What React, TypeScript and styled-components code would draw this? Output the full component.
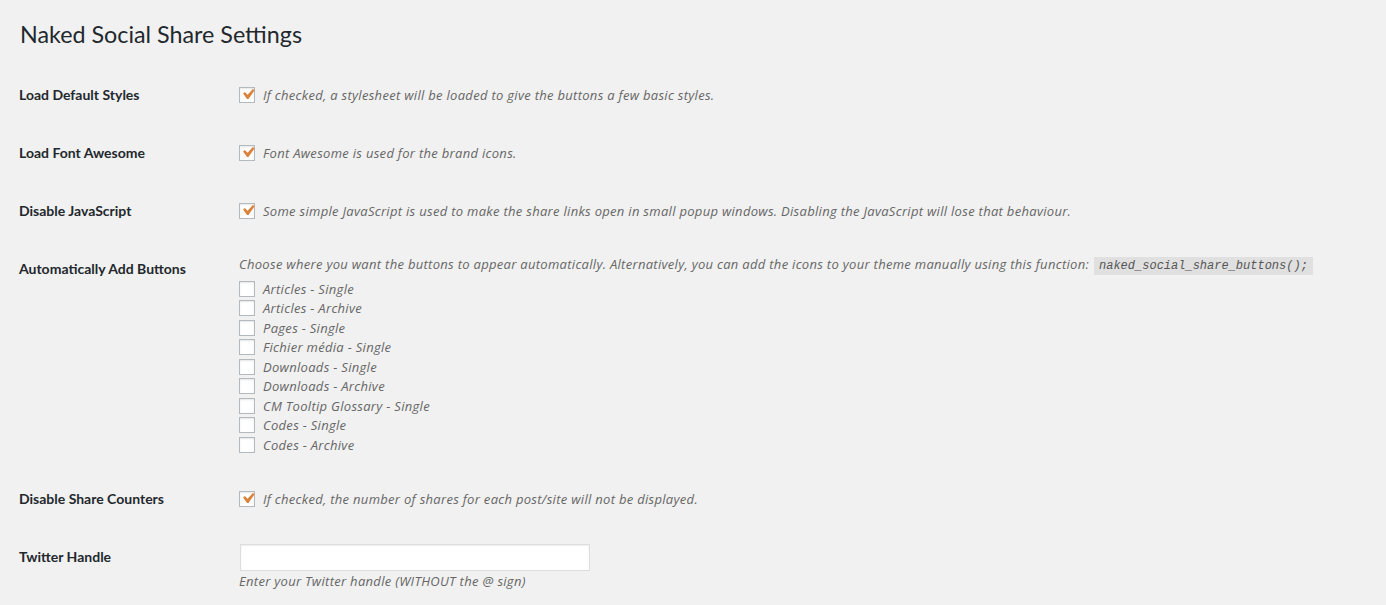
import React from 'react';
import styled, { createGlobalStyle } from 'styled-components';

const GlobalStyle = createGlobalStyle`
    html, body {
        margin: 0;
        padding: 0;
        background: #f1f1f1;
    }
    body {
        font-family: Lato, "Open Sans", sans-serif;
        color: #444;
        font-size: 13px;
    }
`;

const Wrap = styled.div`
    padding: 0 20px 0 19px;
`;

const Title = styled.h1`
    margin: 0 0 20px;
    padding: 20px 0 0 1px;
    height: 46px;
    box-sizing: border-box;
    font-size: 23.3px;
    line-height: 29px;
    font-weight: 400;
    color: #23282d;
`;

const Table = styled.div`
    display: flex;
    flex-direction: column;
`;

const Row = styled.div`
    display: grid;
    grid-template-columns: 220px 1fr;
`;

const Label = styled.div`
    padding: 20px 0;
    font-size: 14px;
    line-height: 18px;
    font-weight: 700;
    color: #23282d;
`;

const Cell = styled.div`
    padding: 15px 0;
`;

const Option = styled.div<{ $h?: number }>`
    display: flex;
    align-items: center;
    gap: 8px;
    height: ${p => p.$h ?? 28}px;
`;

const Box = styled.span`
    width: 16px;
    height: 16px;
    box-sizing: border-box;
    border: 1px solid #b4b9be;
    background: #fff;
    box-shadow: inset 0 1px 2px rgba(0, 0, 0, 0.1);
    display: flex;
    align-items: center;
    justify-content: center;
    flex-shrink: 0;
    overflow: visible;
`;

const Desc = styled.span`
    font-family: "Open Sans", sans-serif;
    font-style: italic;
    color: #666;
    font-size: 13px;
    letter-spacing: 0.3px;
    white-space: nowrap;
`;

const Intro = styled.p`
    margin: 0 0 3px;
    font-family: "Open Sans", sans-serif;
    font-size: 13px;
    letter-spacing: 0.3px;
    font-style: italic;
    color: #666;
    line-height: 19px;
    white-space: nowrap;
`;

const Code = styled.code`
    background: rgba(0, 0, 0, 0.07);
    padding: 2px 5px 2px;
    margin-left: 5px;
    font-family: "Liberation Mono", monospace;
    font-size: 12px;
    letter-spacing: 0;
    font-style: italic;
    color: #555;
`;

const TextInput = styled.input`
    display: block;
    width: 350px;
    height: 27px;
    box-sizing: border-box;
    margin: 1px 0 0 1px;
    border: 1px solid #ddd;
    background: #fff;
    box-shadow: inset 0 1px 2px rgba(0, 0, 0, 0.07);
    outline: none;
`;

const Help = styled.p`
    margin: 1px 0 0;
    font-family: "Open Sans", sans-serif;
    font-size: 13px;
    letter-spacing: 0.3px;
    font-style: italic;
    color: #666;
    line-height: 18px;
`;

const Tick = styled.svg`
    flex-shrink: 0;
    margin: -2px -1px 0 0;
`;

const Check = ({ on }: { on?: boolean }) => (
    <Box>
        {on && (
            <Tick width="20" height="20" viewBox="0 0 20 20">
                <path d="M14.83 4.89l1.8 1.26-6.2 8.96H9.02L5.1 9.6l1.7-1.5 2.8 2.6z" fill="#dd823b" />
            </Tick>
        )}
    </Box>
);

const places = [
    'Articles - Single',
    'Articles - Archive',
    'Pages - Single',
    'Fichier média - Single',
    'Downloads - Single',
    'Downloads - Archive',
    'CM Tooltip Glossary - Single',
    'Codes - Single',
    'Codes - Archive',
];

const App = () => {
    return (
        <Wrap>
            <GlobalStyle />
            <Title>Naked Social Share Settings</Title>
            <Table>
                <Row>
                    <Label>Load Default Styles</Label>
                    <Cell>
                        <Option>
                            <Check on />
                            <Desc>If checked, a stylesheet will be loaded to give the buttons a few basic styles.</Desc>
                        </Option>
                    </Cell>
                </Row>
                <Row>
                    <Label>Load Font Awesome</Label>
                    <Cell>
                        <Option>
                            <Check on />
                            <Desc>Font Awesome is used for the brand icons.</Desc>
                        </Option>
                    </Cell>
                </Row>
                <Row>
                    <Label>Disable JavaScript</Label>
                    <Cell>
                        <Option>
                            <Check on />
                            <Desc>Some simple JavaScript is used to make the share links open in small popup windows. Disabling the JavaScript will lose that behaviour.</Desc>
                        </Option>
                    </Cell>
                </Row>
                <Row>
                    <Label>Automatically Add Buttons</Label>
                    <Cell>
                        <Intro>
                            Choose where you want the buttons to appear automatically. Alternatively, you can add the icons to your theme manually using this function:
                            <Code>naked_social_share_buttons();</Code>
                        </Intro>
                        {places.map(p => (
                            <Option key={p} $h={19.5}>
                                <Check />
                                <Desc>{p}</Desc>
                            </Option>
                        ))}
                    </Cell>
                </Row>
                <Row>
                    <Label>Disable Share Counters</Label>
                    <Cell>
                        <Option>
                            <Check on />
                            <Desc>If checked, the number of shares for each post/site will not be displayed.</Desc>
                        </Option>
                    </Cell>
                </Row>
                <Row>
                    <Label>Twitter Handle</Label>
                    <Cell>
                        <TextInput type="text" />
                        <Help>Enter your Twitter handle (WITHOUT the @ sign)</Help>
                    </Cell>
                </Row>
            </Table>
        </Wrap>
    );
};

export default App;
